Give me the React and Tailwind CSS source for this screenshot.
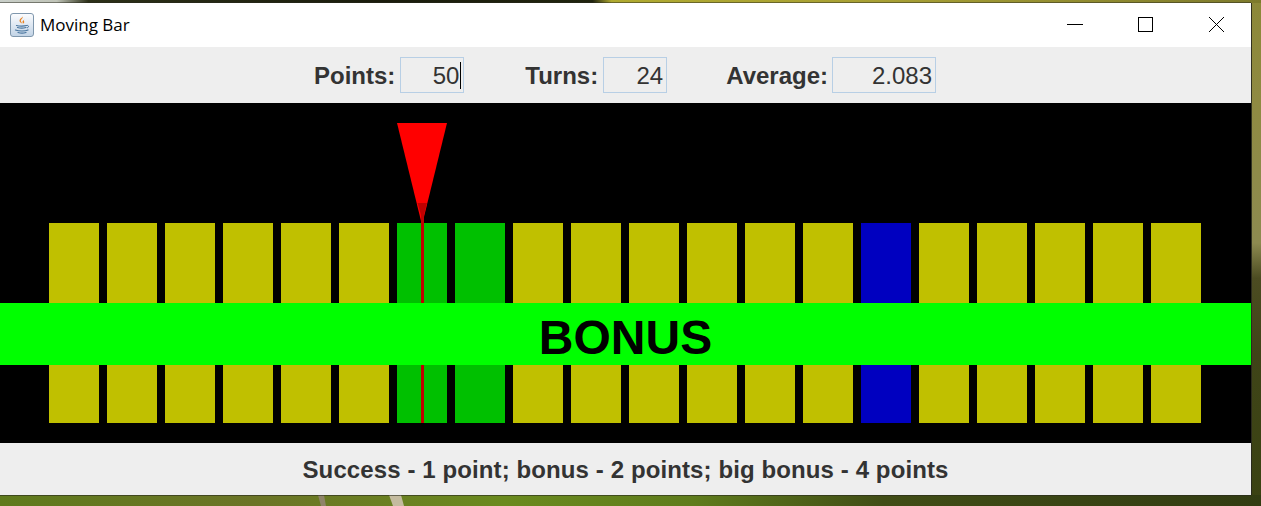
const colors = Array.from({ length: 20 }, (_, i) =>
  i === 6 || i === 7 ? "bg-[#00c000]" : i === 14 ? "bg-[#0000c0]" : "bg-[#c0c000]"
);

function JavaIcon() {
  return (
    <div className="w-[24px] h-[24px] rounded-[3px] border border-[#7f97ad] bg-gradient-to-b from-[#fbfcfe] to-[#c3d4e6] flex items-center justify-center">
      <svg width="18" height="20" viewBox="0 0 18 20" fill="none">
        <path d="M9.5 1.5c1 2-2.5 3-1.5 5 .4.8 1 1.2 1 2-1.6-1-3-2-2.4-3.6C7 3.600 9 3 9.500 1.500z" fill="#e8801e" />
        <path d="M11.500 4.500c-1.500 1-2.500 1.800-1.800 3.200.2.400.2.700 0 1 1.500-.7 2-1.600 1.300-2.500-.4-.6-.1-1.100.5-1.700z" fill="#e8801e" />
        <path d="M3.500 10.500c2.500.7 8 .7 10 0M4.500 12.500c2 .5 6.500.5 8.500 0M2.500 15c3 1.300 10 1.300 12.500 0M5 17.500c2 .6 6 .6 8 0" stroke="#47749e" strokeWidth="1.200" strokeLinecap="round" />
        <path d="M13.500 10.500c2.200-.6 3 1.400.5 2.500" stroke="#47749e" strokeWidth="1" />
      </svg>
    </div>
  );
}

function Field({ value, width, caret }) {
  return (
    <div className={`${width} h-[36px] border border-[#b8cfe5] flex items-center justify-end pr-[3px] pt-[1px] text-[24px] font-normal text-[#333333]`}>
      <span>{value}</span>
      {caret && <span className="w-px h-[27px] bg-black ml-px -mr-[1px]" />}
    </div>
  );
}

function Labeled({ label, children, gap, offset }) {
  return (
    <div className={`flex items-center ${gap} ${offset}`}>
      <span className="text-[24px] font-bold text-[#333333] leading-none pt-[2px]">{label}</span>
      {children}
    </div>
  );
}

function Wallpaper() {
  return (
    <svg className="absolute inset-0" width="1261" height="506" viewBox="0 0 1261 506">
      <defs>
        <linearGradient id="top" x1="0" x2="1" y1="0" y2="0">
          <stop offset="0" stopColor="#c9cfc9" />
          <stop offset="0.045" stopColor="#c0c4b8" />
          <stop offset="0.07" stopColor="#2c3018" />
          <stop offset="0.3" stopColor="#1a1c0c" />
          <stop offset="0.47" stopColor="#20240e" />
          <stop offset="0.485" stopColor="#b0aa30" />
          <stop offset="0.7" stopColor="#a8a035" />
          <stop offset="1" stopColor="#7d7a2c" />
        </linearGradient>
        <linearGradient id="right" x1="0" x2="0" y1="0" y2="1">
          <stop offset="0" stopColor="#8c8838" />
          <stop offset="0.2" stopColor="#8f8a42" />
          <stop offset="0.48" stopColor="#8d8a50" />
          <stop offset="0.55" stopColor="#4c4c22" />
          <stop offset="0.7" stopColor="#3f4418" />
          <stop offset="1" stopColor="#3a4212" />
        </linearGradient>
        <linearGradient id="bottom" x1="0" x2="1" y1="0" y2="0">
          <stop offset="0" stopColor="#5f7a1c" />
          <stop offset="0.2" stopColor="#6b7426" />
          <stop offset="0.4" stopColor="#6a8a1e" />
          <stop offset="0.55" stopColor="#5f7c1c" />
          <stop offset="0.7" stopColor="#414d16" />
          <stop offset="1" stopColor="#323c12" />
        </linearGradient>
      </defs>
      <rect x="1251" y="0" width="10" height="506" fill="url(#right)" />
      <rect x="0" y="495" width="1261" height="11" fill="url(#bottom)" />
      <rect x="0" y="0" width="1261" height="3" fill="url(#top)" />
      <path d="M318 495l3 11h5l-2-11z" fill="#8f8468" />
      <path d="M389 495l4 11h11l-3-11z" fill="#c4bb9f" />
    </svg>
  );
}

export default function App() {
  return (
    <div
      className="relative w-[1261px] h-[506px] overflow-hidden pt-[3px] bg-[#3f4a14]"
      style={{ fontFamily: '"Liberation Sans", Arial, sans-serif' }}
    >
      <Wallpaper />
      <div className="relative w-[1251px] h-[492px] flex flex-col shadow-[1px_0_0_rgba(40,40,30,0.9),0_-1px_0_rgba(40,40,30,0.5),0_1px_0_rgba(40,40,30,0.6)]">
        <div className="h-[44px] bg-white flex items-center pl-[10px] shrink-0">
          <JavaIcon />
          <span className="ml-[6px] text-[17px] text-black" style={{ fontFamily: '"Open Sans", sans-serif' }}>Moving Bar</span>
          <div className="ml-auto flex items-center">
            <svg width="212" height="44" viewBox="0 0 212 44" fill="none" stroke="black" strokeWidth="1">
              <path d="M28 21.500h16" />
              <rect x="99.500" y="14.500" width="14" height="14" />
              <path d="M170 14l15 15M185 14l-15 15" />
            </svg>
          </div>
        </div>
        <div className="h-[56px] bg-[#eeeeee] shrink-0 flex items-center pl-[314px]">
          <Labeled label="Points:" gap="gap-[5px]"><Field value="50" width="w-[64px]" caret /></Labeled>
          <Labeled label="Turns:" gap="gap-[5px]" offset="ml-[61px]"><Field value="24" width="w-[64px]" /></Labeled>
          <Labeled label="Average:" gap="gap-[4px]" offset="ml-[59px]"><Field value="2.083" width="w-[104px]" /></Labeled>
        </div>
        <div className="h-[340px] bg-black relative shrink-0">
          <div className="pt-[120px] pl-[49px] flex gap-[8px]">
            {colors.map((c, i) => (
              <div key={i} className={`w-[50px] h-[200px] ${c}`} />
            ))}
          </div>
          <svg className="absolute left-[397px] top-[20px]" width="50" height="300" viewBox="0 0 50 300">
            <polygon points="0,0 50,0 25.500,100 24.500,100" fill="#ff0000" />
            <polygon points="20.500,80 30,80 27,92 24,92" fill="#c00000" />
            <rect x="24" y="92" width="3" height="208" fill="#c00000" />
          </svg>
          <div className="absolute left-0 right-0 top-[200px] h-[62px] bg-[#00ff00] flex items-center justify-center pt-[7px] text-[48px] font-bold text-black leading-none">
            BONUS
          </div>
        </div>
        <div className="flex-1 bg-[#eeeeee] flex items-center justify-center pt-[2px] text-[24px] tracking-[0.105px] font-bold text-[#333333]">
          Success - 1 point; bonus - 2 points; big bonus - 4 points
        </div>
      </div>
    </div>
  );
}
